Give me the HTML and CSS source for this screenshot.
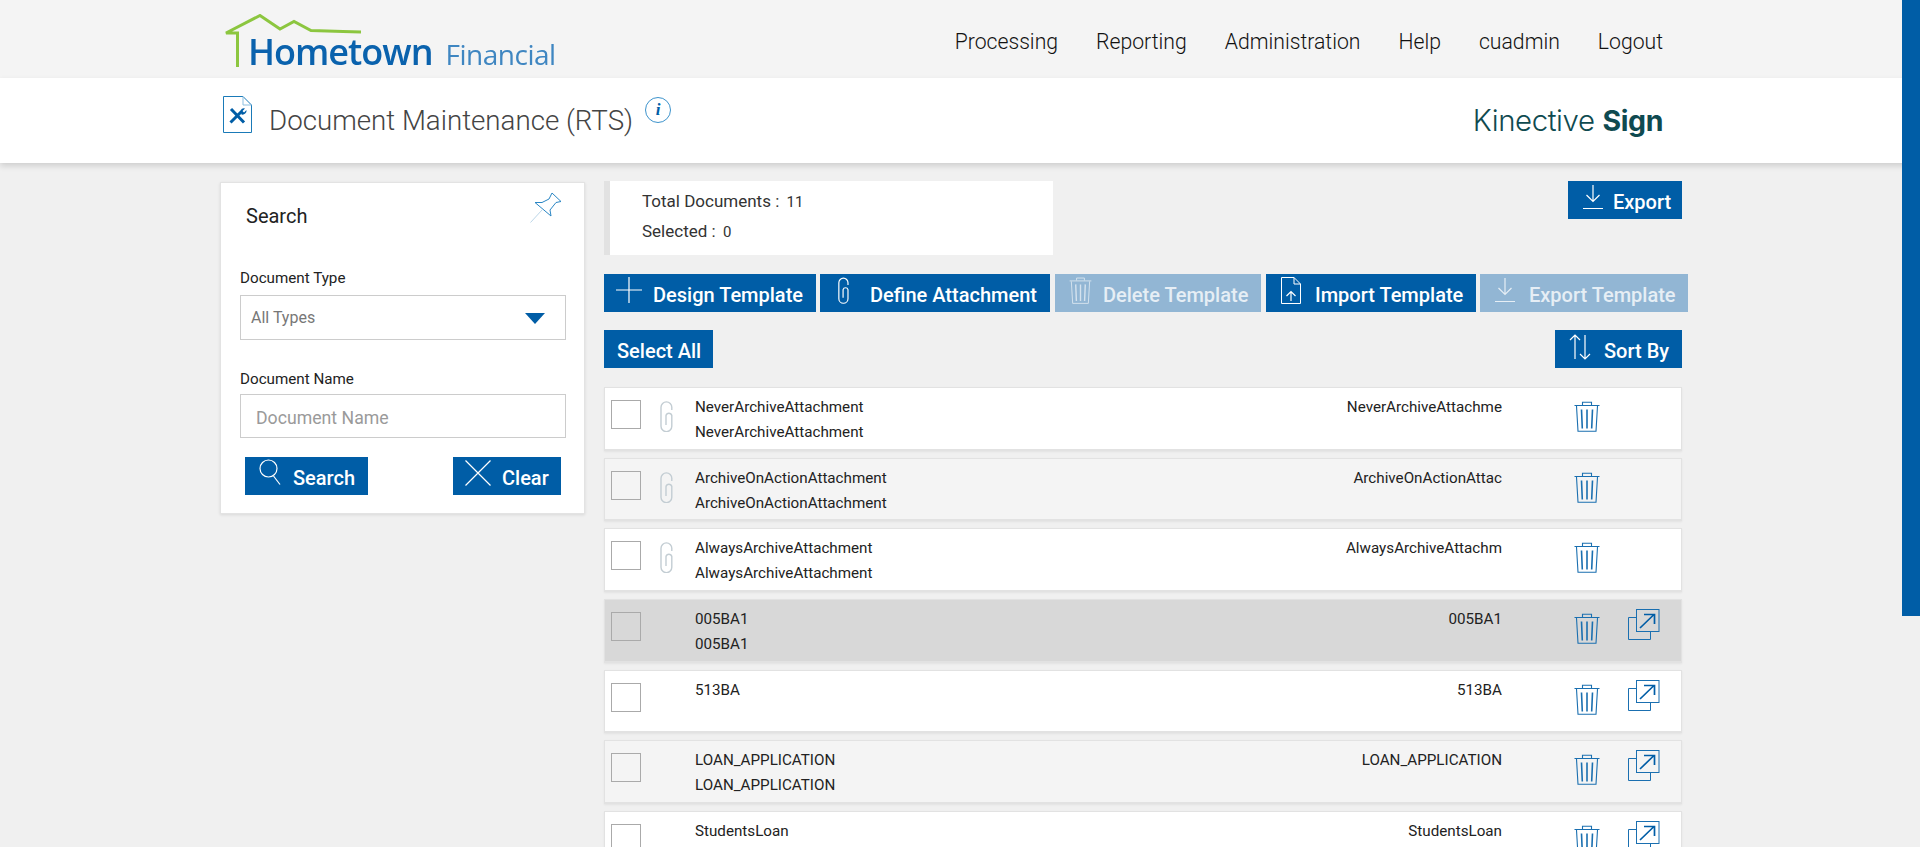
FILE: index.html
```html
<!DOCTYPE html>
<html lang="en">
<head>
<meta charset="utf-8">
<title>Document Maintenance (RTS)</title>
<link rel="stylesheet" href="styles.css">
</head>
<body>
<svg class="defs" width="0" height="0" aria-hidden="true">
  <symbol id="i-trash" viewBox="0 0 26 31">
    <path d="M0.5 4.5H25.5M8.5 4V1.2H17.5V4M2.5 5L4 30.3H22L23.5 5" fill="none" stroke="currentColor" stroke-width="1.1"/>
    <path d="M7.5 8.5L8.3 27.5M13 8.5V27.5M18.5 8.5L17.7 27.5" fill="none" stroke="currentColor" stroke-width="1.6"/>
  </symbol>
  <symbol id="i-clip" viewBox="0 0 13 31">
    <path d="M11.8 9V6.3A5.4 5.4 0 0 0 1 6.3V25.2A5.4 5.4 0 0 0 11.8 25.2V14.5A3 3 0 0 0 6 14.5V24" fill="none" stroke="currentColor" stroke-width="1.4"/>
  </symbol>
  <symbol id="i-open" viewBox="0 0 32 31">
    <path d="M8.5 8.5H0.5V30.5H22.5V22.5" fill="none" stroke="#1a6fb0"/>
    <rect x="8.5" y="0.5" width="22.5" height="22" fill="none" stroke="#1a6fb0"/>
    <path d="M12 19L26 5.5M16 5.5H26.5V15" fill="none" stroke="#005da6" stroke-width="1.7"/>
  </symbol>
  <symbol id="i-plus" viewBox="0 0 26 26"><path d="M13 0V26M0 13H26" fill="none" stroke="currentColor" stroke-width="1.2"/></symbol>
  <symbol id="i-down" viewBox="0 0 20 25"><path d="M10 0V16M3.5 10L10 16.5L16.5 10M0 23.5H20" fill="none" stroke="currentColor" stroke-width="1.2"/></symbol>
  <symbol id="i-import" viewBox="0 0 20 27">
    <path d="M0.5 0.5H13L19.5 7V26.5H0.5ZM13 0.5V7H19.5" fill="none" stroke="currentColor"/>
    <path d="M10 24V15M5.5 19L10 14.5L14.5 19" fill="none" stroke="currentColor" stroke-width="1.2"/>
  </symbol>
  <symbol id="i-search" viewBox="0 0 22 26"><circle cx="9.5" cy="9.5" r="8.5" fill="none" stroke="currentColor" stroke-width="1.2"/><path d="M14.5 17L21 25.5" fill="none" stroke="currentColor" stroke-width="1.2"/></symbol>
  <symbol id="i-x" viewBox="0 0 26 26"><path d="M0.5 0.5L25.5 25.5M25.5 0.5L0.5 25.5" fill="none" stroke="currentColor" stroke-width="1.2"/></symbol>
  <symbol id="i-sort" viewBox="0 0 22 26"><path d="M6 25V1M1 6L6 1L11 6M16 1V25M11 20L16 25L21 20" fill="none" stroke="currentColor" stroke-width="1.2"/></symbol>
</svg>

<header class="topbar">
  <a class="logo">
    <svg class="logo-roof" viewBox="0 0 140 54" aria-hidden="true">
      <path d="M14.5 53V19H3L37 1.5L57 15L71 7.5L88 16.5L120 17.5L138 18" fill="none" stroke="#8cc63f" stroke-width="3"/>
    </svg>
    <span class="logo-main">Hometown</span>
    <span class="logo-sub">Financial</span>
  </a>
  <nav class="nav">
    <a>Processing</a><a>Reporting</a><a>Administration</a><a>Help</a><a>cuadmin</a><a>Logout</a>
  </nav>
</header>

<section class="titlebar">
  <div class="title-left">
    <svg class="title-doc" viewBox="0 0 29 37" aria-hidden="true">
      <path d="M0.5 0.5H20L28.5 9V36.5H0.5Z" fill="none" stroke="#1a7ab8"/>
      <path d="M20 0.5V9H28.5" fill="none" stroke="#8dbfe0"/>
      <path d="M8 13L21 26.5M7.5 26.5L18.5 15.5" fill="none" stroke="#005da6" stroke-width="3"/>
      <path d="M17.5 14.5A4 4 0 0 1 22 12.5L19.5 15L21 16.5L23.5 14A4 4 0 0 1 18.5 18.5Z" fill="#005da6"/>
    </svg>
    <h1 class="title-text">Document Maintenance (RTS)</h1>
    <span class="info">i</span>
  </div>
  <div class="brand">Kinective <b>Sign</b></div>
</section>

<main class="main">
  <aside class="panel">
    <div class="panel-head">
      <span class="panel-title">Search</span>
      <svg class="pin" viewBox="0 0 32 32" aria-hidden="true">
        <path d="M22 1L31 9.5L26 10.5L20 18L21 24L5 10.5L12 10.5L19 7Z" fill="#fff" stroke="#2a86c4"/>
        <path d="M12 18L0.5 30.5" fill="none" stroke="#bcd6e8"/>
      </svg>
    </div>
    <label class="field-label">Document Type</label>
    <div class="select">
      <span>All Types</span>
      <i class="caret"></i>
    </div>
    <label class="field-label field-label-second">Document Name</label>
    <div class="input">Document Name</div>
    <div class="panel-actions">
      <button class="btn btn-search"><svg class="ic ic-search"><use href="#i-search"/></svg>Search</button>
      <button class="btn btn-clear"><svg class="ic ic-x"><use href="#i-x"/></svg>Clear</button>
    </div>
  </aside>

  <div class="content">
    <div class="summary-row">
      <div class="summary">
        <div>Total Documents : <small>11</small></div>
        <div>Selected : <small>0</small></div>
      </div>
      <button class="btn btn-export"><svg class="ic ic-down"><use href="#i-down"/></svg>Export</button>
    </div>

    <div class="toolbar">
      <button class="btn b-design"><svg class="ic ic-plus"><use href="#i-plus"/></svg>Design Template</button>
      <button class="btn b-define"><svg class="ic ic-clip"><use href="#i-clip"/></svg>Define Attachment</button>
      <button class="btn is-off b-delete"><svg class="ic ic-tr"><use href="#i-trash"/></svg>Delete Template</button>
      <button class="btn b-import"><svg class="ic ic-import"><use href="#i-import"/></svg>Import Template</button>
      <button class="btn is-off b-exp"><svg class="ic ic-down"><use href="#i-down"/></svg>Export Template</button>
    </div>

    <div class="sortbar">
      <button class="btn b-all">Select All</button>
      <button class="btn b-sort"><svg class="ic ic-sort"><use href="#i-sort"/></svg>Sort By</button>
    </div>

    <div class="list">
      <article class="row">
        <span class="check"></span><svg class="clip"><use href="#i-clip"/></svg>
        <div class="names"><div>NeverArchiveAttachment</div><div>NeverArchiveAttachment</div></div>
        <div class="code">NeverArchiveAttachme</div>
        <svg class="trash"><use href="#i-trash"/></svg>
      </article>
      <article class="row row-alt">
        <span class="check"></span><svg class="clip"><use href="#i-clip"/></svg>
        <div class="names"><div>ArchiveOnActionAttachment</div><div>ArchiveOnActionAttachment</div></div>
        <div class="code">ArchiveOnActionAttac</div>
        <svg class="trash"><use href="#i-trash"/></svg>
      </article>
      <article class="row">
        <span class="check"></span><svg class="clip"><use href="#i-clip"/></svg>
        <div class="names"><div>AlwaysArchiveAttachment</div><div>AlwaysArchiveAttachment</div></div>
        <div class="code">AlwaysArchiveAttachm</div>
        <svg class="trash"><use href="#i-trash"/></svg>
      </article>
      <article class="row row-sel">
        <span class="check"></span><span class="clip"></span>
        <div class="names"><div>005BA1</div><div>005BA1</div></div>
        <div class="code">005BA1</div>
        <svg class="trash"><use href="#i-trash"/></svg>
        <svg class="open"><use href="#i-open"/></svg>
      </article>
      <article class="row">
        <span class="check"></span><span class="clip"></span>
        <div class="names"><div>513BA</div><div>&nbsp;</div></div>
        <div class="code">513BA</div>
        <svg class="trash"><use href="#i-trash"/></svg>
        <svg class="open"><use href="#i-open"/></svg>
      </article>
      <article class="row row-alt">
        <span class="check"></span><span class="clip"></span>
        <div class="names"><div>LOAN_APPLICATION</div><div>LOAN_APPLICATION</div></div>
        <div class="code">LOAN_APPLICATION</div>
        <svg class="trash"><use href="#i-trash"/></svg>
        <svg class="open"><use href="#i-open"/></svg>
      </article>
      <article class="row">
        <span class="check"></span><span class="clip"></span>
        <div class="names"><div>StudentsLoan</div></div>
        <div class="code">StudentsLoan</div>
        <svg class="trash"><use href="#i-trash"/></svg>
        <svg class="open"><use href="#i-open"/></svg>
      </article>
    </div>
  </div>
</main>

<div class="scrolltrack"><div class="scrollthumb"></div></div>
</body>
</html>
```
FILE: styles.css
```css
* { box-sizing: border-box; }
html, body { margin: 0; height: 847px; overflow: hidden; }
body { background: #f0f0f0; font-family: Roboto, "Liberation Sans", sans-serif; color: #222; }
.defs { position: absolute; }

.topbar { height: 78px; background: #f4f4f4; display: flex; justify-content: space-between; padding: 0 0 0 222px; }
.logo { display: flex; align-items: flex-end; position: relative; width: 340px; height: 70px; padding: 0 0 0 26px; }
.logo-roof { position: absolute; left: 1px; top: 14px; width: 140px; height: 54px; }
.logo-main { font: 600 36px/1 "Open Sans", sans-serif; color: #0a62ad; letter-spacing: -1px; filter: blur(.4px); }
.logo-sub { font: 400 28px/1 "Open Sans", sans-serif; color: #3f86c1; margin: 0 0 2px 13px; letter-spacing: -.5px; filter: blur(.4px); }
.nav { display: flex; gap: 38px; padding: 29px 0 0; margin-right: 257px; font-size: 21.2px; font-weight: 300; line-height: 26px; color: #111; }

.titlebar { height: 85px; background: #fff; box-shadow: 0 3px 6px rgba(0,0,0,.14); display: flex; justify-content: space-between; padding: 0 257px 0 223px; position: relative; }
.title-left { display: flex; align-items: flex-start; }
.title-doc { width: 29px; height: 37px; margin-top: 18px; }
.title-text { margin: 25px 0 0 17px; font-size: 27.7px; font-weight: 300; line-height: 36px; color: #444; }
.info { width: 26px; height: 26px; margin: 19px 0 0 12px; border: 1px solid #3d93cc; border-radius: 50%; font: italic 700 17px/24px "Liberation Serif", serif; text-align: center; color: #005da6; }
.brand { margin-top: 25px; font: 300 29.4px/36px Inter, sans-serif; color: #0f4a50; letter-spacing: -.4px; }
.brand b { font-size: 28.5px; font-weight: 700; }

.main { display: flex; gap: 19px; padding: 18px 0 0 220px; align-items: flex-start; }
.panel { width: 365px; height: 332px; background: #fff; border: 1px solid #e3e3e3; box-shadow: 0 1px 3px rgba(0,0,0,.1); padding: 0 18px 0 19px; margin-top: 1px; }
.panel-head { display: flex; justify-content: space-between; height: 85px; padding: 18px 7px 0 6px; }
.panel-title { font-size: 20px; line-height: 30px; color: #222; }
.pin { width: 32px; height: 32px; margin-top: -9px; margin-right: -3px; }
.field-label { display: block; font-size: 15.2px; line-height: 20px; color: #222; }
.field-label-second { margin-top: 29px; }
.select { height: 45px; margin-top: 7px; border: 1px solid #ccc; display: flex; justify-content: space-between; align-items: center; padding: 0 20px 0 10px; font-size: 16px; color: #777; }
.caret { width: 0; height: 0; border-left: 10px solid transparent; border-right: 10px solid transparent; border-top: 11px solid #005da6; margin-top: 2px; }
.input { height: 44px; margin-top: 5px; border: 1px solid #ccc; padding: 2px 15px 0; font-size: 17.7px; line-height: 43px; color: #9a9a9a; }
.panel-actions { display: flex; justify-content: space-between; padding: 19px 5px 0; }

.btn { display: inline-flex; align-items: center; justify-content: flex-start; height: 38px; border: 0; padding: 4px 0 0; background: #005da6; color: #fff; font: 500 20px/30px Roboto, sans-serif; white-space: nowrap; flex: none; }
.btn.is-off { background: #92b6d4; color: #e6eef5; }
.ic { display: block; color: inherit; flex: none; }
.ic-search { width: 22px; height: 26px; margin: -12px 12px 0 14px; }
.ic-x { width: 26px; height: 26px; margin: -10px 11px 0 12px; }
.ic-down { width: 20px; height: 25px; margin: -10px 10px 0 15px; }
.ic-plus { width: 26px; height: 26px; margin: -10px 11px 0 12px; }
.ic-clip { width: 11px; height: 27px; margin: -10px 21px 0 18px; }
.ic-tr { width: 23px; height: 27px; margin: -10px 11px 0 14px; opacity: .8; }
.ic-import { width: 20px; height: 27px; margin: -10px 14px 0 15px; }
.ic-sort { width: 22px; height: 26px; margin: -8px 13px 0 14px; }
.btn-search { width: 123px; }
.btn-clear { width: 108px; }
.btn-export { width: 114px; }
.b-design { width: 212px; }
.b-define { width: 230px; }
.b-delete { width: 206px; }
.b-import { width: 210px; }
.b-exp { width: 208px; }
.b-exp .ic-down { margin-right: 14px; }
.b-all { width: 109px; padding-left: 13px; }
.b-sort { width: 127px; }

.content { width: 1078px; }
.summary-row { display: flex; justify-content: space-between; align-items: flex-start; }
.summary { width: 449px; height: 74px; background: #fff; border-left: 6px solid #e2e2e2; padding: 6px 0 0 32px; font-size: 17px; line-height: 29px; color: #333; }
.summary small { font-size: 15px; margin-left: 3px; }
.toolbar { display: flex; gap: 4px; margin-top: 19px; width: 1100px; }
.toolbar .b-delete, .toolbar .b-import { margin-left: 1px; }
.sortbar { display: flex; justify-content: space-between; margin-top: 18px; }

.list { display: flex; flex-direction: column; gap: 7px; margin-top: 19px; }
.row { flex: none; height: 63.67px; background: #fff; border: 1px solid #e2e2e2; border-width: 1px 1px 2px; box-shadow: 0 1px 2px rgba(0,0,0,.06); display: flex; align-items: flex-start; padding: 12px 0 0 6px; }
.row-alt { background: #f4f4f4; }
.row-sel { background: #d8d8d8; }
.check { width: 30px; height: 29px; border: 1px solid #aaa; flex: none; }
.clip { width: 13px; height: 31px; margin: 1px 0 0 19px; color: #c3cdd3; flex: none; }
.names { width: 280px; margin-left: 22px; margin-top: -5px; font-size: 15.2px; line-height: 25px; color: #222; white-space: nowrap; }
.code { width: 527px; margin-top: -5px; font-size: 15.2px; line-height: 25px; text-align: right; color: #222; white-space: nowrap; }
.trash { width: 26px; height: 31px; margin: 1px 0 0 72px; color: #1a6fb0; flex: none; }
.open { width: 32px; height: 31px; margin: -3px 0 0 28px; flex: none; }

.scrolltrack { position: fixed; right: 0; top: 0; bottom: 0; width: 18px; background: #f0f0f0; }
.scrollthumb { height: 616px; background: #005da6; }
```
